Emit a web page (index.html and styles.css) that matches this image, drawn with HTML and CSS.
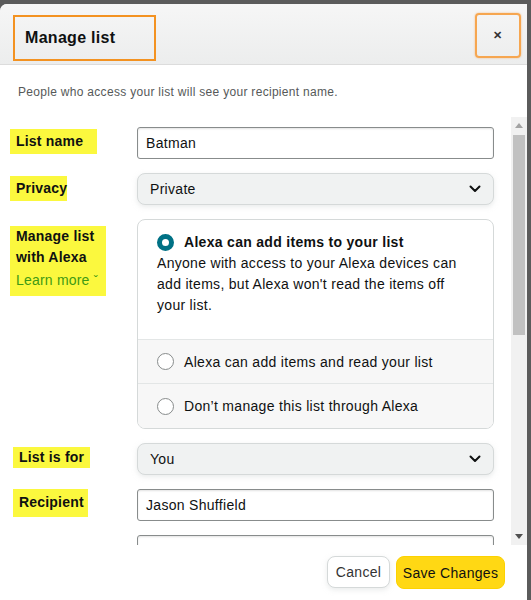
FILE: index.html
```html
<!DOCTYPE html>
<html>
<head>
<meta charset="utf-8">
<link rel="stylesheet" href="styles.css">
</head>
<body>
<div class="modal">
  <div class="header">
    <div class="title-box"><h1 class="title">Manage list</h1></div>
    <div class="close-box"><span class="close">&#x2715;</span></div>
  </div>
  <p class="note">People who access your list will see your recipient name.</p>
  <div class="scroll">
    <div class="content">
      <div class="row">
        <div class="label"><span class="hl hl-name">List name</span></div>
        <div class="input">Batman</div>
      </div>
      <div class="row">
        <div class="label"><span class="hl hl-privacy">Privacy</span></div>
        <div class="select">Private<svg class="chev" viewBox="0 0 12 8" width="12" height="8"><path d="M1.5 1.5 L6 6 L10.5 1.5" fill="none" stroke="#0f1111" stroke-width="2" stroke-linecap="round" stroke-linejoin="round"/></svg></div>
      </div>
      <div class="row">
        <div class="label"><span class="hl hl-alexa">Manage list<br>with Alexa<br><span class="learn">Learn more <span class="caret">&#x2C7;</span></span></span></div>
        <div class="card">
          <div class="opt opt-main">
            <div class="opt-head"><span class="radio radio-on"></span><span class="opt-title">Alexa can add items to your list</span></div>
            <p class="opt-desc">Anyone with access to your Alexa devices can add items, but Alexa won't read the items off your list.</p>
          </div>
          <div class="opt opt-alt"><span class="radio"></span><span class="opt-text">Alexa can add items and read your list</span></div>
          <div class="opt opt-alt opt-last"><span class="radio"></span><span class="opt-text">Don’t manage this list through Alexa</span></div>
        </div>
      </div>
      <div class="row">
        <div class="label"><span class="hl hl-for">List is for</span></div>
        <div class="select">You<svg class="chev" viewBox="0 0 12 8" width="12" height="8"><path d="M1.5 1.5 L6 6 L10.5 1.5" fill="none" stroke="#0f1111" stroke-width="2" stroke-linecap="round" stroke-linejoin="round"/></svg></div>
      </div>
      <div class="row">
        <div class="label"><span class="hl hl-rec">Recipient</span></div>
        <div class="input">Jason Shuffield</div>
      </div>
      <div class="row">
        <div class="label"></div>
        <div class="input"></div>
      </div>
    </div>
    <div class="scrollbar">
      <div class="arrow"><svg viewBox="0 0 8 5" width="8" height="5"><path d="M0 5 L4 0 L8 5 Z" fill="#a3a3a3"/></svg></div>
      <div class="track"><div class="thumb"></div></div>
      <div class="arrow"><svg viewBox="0 0 8 5" width="8" height="5"><path d="M0 0 L4 5 L8 0 Z" fill="#505050"/></svg></div>
    </div>
  </div>
  <div class="footer">
    <button class="btn btn-cancel">Cancel</button>
    <button class="btn btn-save">Save Changes</button>
  </div>
</div>
</body>
</html>
```
FILE: styles.css
```css
html, body {
  margin: 0;
  padding: 0;
  background: #5b5b5b;
  height: 600px;
  overflow: hidden;
}
body {
  font-family: "Liberation Sans", Arial, sans-serif;
  color: #0f1111;
  letter-spacing: 0.3px;
}
.modal {
  margin: 4px 4px 0 0;
  height: 596px;
  background: #ffffff;
  border-top-left-radius: 7px;
  display: flex;
  flex-direction: column;
  overflow: hidden;
}
.header {
  height: 61px;
  box-sizing: border-box;
  background: linear-gradient(#f6f6f6, #eceded);
  border-bottom: 1px solid #dcdcdc;
  display: flex;
  align-items: flex-start;
  justify-content: space-between;
  padding: 11px 6px 0 13px;
  flex: none;
}
.title-box {
  width: 143px;
  height: 46px;
  box-sizing: border-box;
  border: 2px solid #f39221;
  display: flex;
  align-items: center;
  padding-left: 10px;
}
.title {
  margin: 0;
  font-size: 16px;
  font-weight: 700;
  color: #0f1111;
}
.close-box {
  width: 46px;
  height: 45px;
  box-sizing: border-box;
  border: 2px solid #f6a650;
  border-radius: 4px;
  box-shadow: 0 0 2px rgba(246, 150, 50, 0.6);
  display: flex;
  align-items: center;
  justify-content: center;
  margin-top: -2px;
}
.close {
  font-size: 11px;
  font-weight: 700;
  color: #333;
}
.note {
  margin: 0;
  height: 52px;
  box-sizing: border-box;
  padding: 20px 0 0 18px;
  font-size: 12px;
  color: #565959;
  flex: none;
}
.scroll {
  height: 428px;
  display: flex;
  flex: none;
}
.content {
  width: 511px;
  overflow: hidden;
  padding-top: 10px;
  box-sizing: border-box;
  display: flex;
  flex-direction: column;
  gap: 14px;
}
.row {
  display: grid;
  grid-template-columns: 127px 357px;
  padding-left: 10px;
}
.label {
  font-size: 14px;
  font-weight: 700;
  line-height: 21px;
  letter-spacing: 0.2px;
}
.hl {
  display: inline-block;
  background: #fbf83e;
  padding: 2px 6px 2px 6px;
  white-space: nowrap;
}
.hl-name { width: 75px; margin-top: 2px; }
.hl-privacy { width: 45px; margin-top: 3px; }
.hl-alexa { width: 84px; padding-top: 0; padding-bottom: 3px; margin-top: 7px; }
.hl-for { width: 65px; margin-left: 3px; padding: 0 6px; margin-top: 4px; }
.hl-rec { width: 63px; margin-left: 3px; padding: 3px 6px 4px; }
.learn {
  font-weight: 400;
  color: #3f9a14;
  line-height: 24px;
}
.caret {
  font-size: 12px;
}
.input {
  height: 32px;
  box-sizing: border-box;
  border: 1px solid #888c8c;
  border-radius: 3px;
  box-shadow: inset 0 1px 2px rgba(15, 17, 17, 0.12);
  padding: 0 8px;
  font-size: 14px;
  line-height: 30px;
  color: #0f1111;
}
.select {
  height: 32px;
  box-sizing: border-box;
  border: 1px solid #d5d9d9;
  border-radius: 8px;
  background: #f0f2f2;
  box-shadow: 0 2px 5px rgba(213, 217, 217, 0.5);
  padding: 0 12px;
  font-size: 14px;
  line-height: 30px;
  display: flex;
  align-items: center;
  justify-content: space-between;
}
.card {
  border: 1px solid #d5d9d9;
  border-radius: 8px;
  overflow: hidden;
  font-size: 14px;
}
.opt-main {
  height: 120px;
  box-sizing: border-box;
  padding: 13px 30px 0 19px;
  border-bottom: 1px solid #e3e6e6;
}
.opt-head {
  display: flex;
  align-items: center;
  height: 18px;
}
.opt-title {
  font-weight: 700;
  margin-left: 10px;
}
.opt-desc {
  margin: 2px 0 0 0;
  line-height: 21px;
  color: #0f1111;
}
.radio {
  width: 17px;
  height: 17px;
  box-sizing: border-box;
  border-radius: 50%;
  border: 1px solid #888c8c;
  background: #fff;
  flex: none;
}
.radio-on {
  border: 5px solid #007185;
}
.opt-alt {
  height: 44px;
  box-sizing: border-box;
  background: #f7f7f7;
  border-bottom: 1px solid #e3e6e6;
  display: flex;
  align-items: center;
  padding-left: 19px;
}
.opt-last { border-bottom: 0; }
.opt-text { margin-left: 10px; }
.scrollbar {
  width: 16px;
  background: #f1f1f1;
  display: flex;
  flex-direction: column;
}
.arrow {
  height: 17px;
  display: flex;
  align-items: center;
  justify-content: center;
}
.track {
  flex: 1;
  padding: 1px 2px;
}
.thumb {
  height: 200px;
  background: #c1c1c1;
}
.footer {
  flex: 1;
  display: flex;
  justify-content: flex-end;
  align-items: flex-start;
  gap: 6px;
  padding: 11px 22px 0 0;
}
.btn {
  font-family: "Liberation Sans", Arial, sans-serif;
  font-size: 14px;
  letter-spacing: 0.3px;
  height: 32px;
  border-radius: 8px;
  padding: 0;
  white-space: nowrap;
  cursor: pointer;
}
.btn-cancel {
  background: #fff;
  border: 1px solid #d5d9d9;
  color: #333;
  width: 63px;
  box-shadow: 0 2px 5px rgba(213, 217, 217, 0.5);
}
.btn-save {
  background: #ffd814;
  border: 1px solid #fcd200;
  color: #0f1111;
  width: 109px;
  height: 33px;
}
```
